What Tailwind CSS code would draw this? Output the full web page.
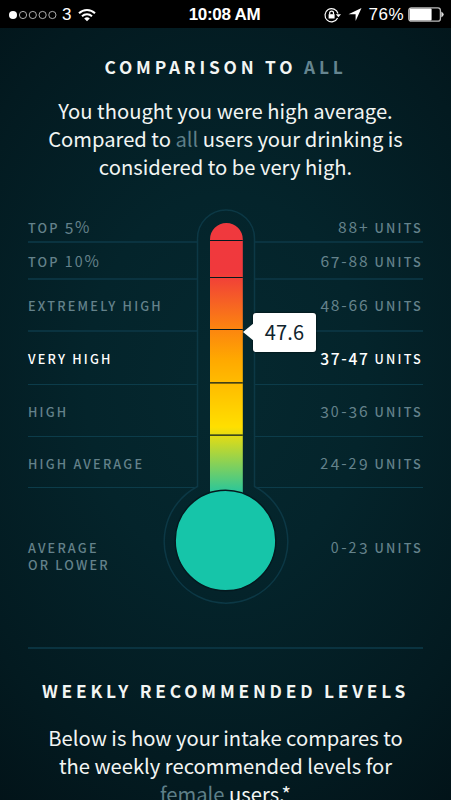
<!DOCTYPE html>
<html lang="en">
<head>
    <meta charset="UTF-8">
    <meta name="viewport" content="width=device-width, initial-scale=1.0">
    <title>Drink Comparison</title>
    <script src="https://cdn.jsdelivr.net/npm/@tailwindcss/browser@4"></script>
</head>
<body class="h-[800px] w-[451px] overflow-hidden bg-black font-['Noto_Sans_CJK_JP','Open_Sans',sans-serif] text-[#f2f5f3]">
    <!-- Status bar -->
    <header class="grid h-7 grid-cols-3 items-center bg-black pl-[9px] pr-[7px] font-['Liberation_Sans',sans-serif] text-white">
        <div class="flex items-center pt-px">
            <svg class="h-[10px] w-[49px]" viewBox="0 0 49 10" fill="none" stroke="#d5d5d5" stroke-width="0.8">
                <circle cx="4" cy="5" r="4" fill="#fff" stroke="none"/>
                <circle cx="14" cy="5" r="3.6"/>
                <circle cx="23.8" cy="5" r="3.6"/>
                <circle cx="33.6" cy="5" r="3.6"/>
                <circle cx="43.4" cy="5" r="3.6"/>
            </svg>
            <span class="ml-[4px] text-[17px] leading-[27px]">3</span>
            <svg class="ml-[7px] h-[14px] w-[18px]" viewBox="0 0 18 14" fill="none" stroke="#fff" stroke-width="2">
                <path d="M1 5.2A11.5 11.5 0 0 1 17 5.2"/>
                <path d="M4 8.3A7.2 7.2 0 0 1 14 8.3"/>
                <path d="M9 13.3L6.2 10.5A4 4 0 0 1 11.8 10.5Z" fill="#fff" stroke="none"/>
            </svg>
        </div>
        <div class="-ml-1 whitespace-nowrap pt-px text-center text-[17px] font-bold leading-[27px] tracking-[-0.3px]">10:08 AM</div>
        <div class="flex items-center justify-end pt-px">
            <svg class="h-4 w-[18px]" viewBox="0 0 18 16" fill="none" stroke="#fff" stroke-width="1.2">
                <path d="M13.6 11A6.6 6.6 0 1 1 14 6.5"/>
                <path d="M11.8 7.2H17L14.4 10.2Z" fill="#fff" stroke="none"/>
                <rect x="4.6" y="7.2" width="6" height="4.3" fill="#fff" stroke="none"/>
                <path d="M5.7 7.4V6A1.9 1.9 0 0 1 9.5 6V7.4"/>
            </svg>
            <svg class="ml-[6px] h-[13px] w-[14px]" viewBox="0 0 14 13" fill="#fff">
                <path d="M13.5 0L7.6 13V6.3H0.5Z"/>
            </svg>
            <span class="ml-[6px] text-[17px] leading-[27px] tracking-[0.5px]">76%</span>
            <svg class="ml-[4px] h-[15px] w-9" viewBox="0 0 36 15">
                <rect x="0.8" y="0.8" width="31.6" height="13.4" rx="2.5" fill="none" stroke="#bbb" stroke-width="1.3"/>
                <rect x="1.6" y="1.6" width="22" height="11.8" rx="1" fill="#fff"/>
                <path d="M33.3 4.4Q35.7 5.8 35.7 7.4T33.3 10.4Z" fill="#ddd"/>
            </svg>
        </div>
    </header>

    <main class="h-[772px] overflow-hidden bg-[radial-gradient(ellipse_400px_540px_at_50%_46%,#05282f_0%,#04242b_35%,#031a20_75%,#021217_100%)] px-7">
        <h1 class="pt-[25px] text-center text-[17.3px] font-bold leading-7 tracking-[3.8px]">COMPARISON TO <span class="text-[#658590]">ALL</span></h1>
        <p class="mt-4 whitespace-nowrap text-center text-[20.2px] leading-[28px]">
            You thought you were high average.<br>
            Compared to <span class="text-[#5e7f88]">all</span> users your drinking is<br>
            considered to be very high.
        </p>

        <!-- Thermometer chart, figures are set old-style: 0 1 2 small, 3 4 5 7 9 lowered -->
        <section class="relative mt-[27px] h-[439px] text-[12.7px] font-medium leading-[17px] tracking-[2.2px] text-[#64828b]">
            <div class="flex h-[35px] justify-between">
                <div class="flex w-[169px] items-end border-b-2 border-[#0a3340] pb-[5px]"><span>TOP <span class="text-[15.6px] font-normal tracking-[1.4px]"><span class="relative top-px">5</span>%</span></span></div>
                <div class="flex w-[168px] items-end justify-end border-b-2 border-[#0a3340] pb-[5px]"><span><span class="text-[15.6px] font-normal tracking-[1.8px]">88+</span> UNITS</span></div>
            </div>
            <div class="flex h-[37px] justify-between">
                <div class="flex w-[169px] items-center border-b-2 border-[#0a3340]"><span>TOP <span class="text-[15.6px] font-normal tracking-[1.4px]"><span class="text-[14.2px] tracking-[2px]">10</span>%</span></span></div>
                <div class="flex w-[168px] items-center justify-end border-b-2 border-[#0a3340]"><span><span class="text-[15.6px] font-normal tracking-[1.8px]">6<span class="relative top-px">7</span>-88</span> UNITS</span></div>
            </div>
            <div class="flex h-[52px] justify-between">
                <div class="flex w-[169px] items-center border-b-2 border-[#0a3340]">EXTREMELY HIGH</div>
                <div class="flex w-[168px] items-center justify-end border-b-2 border-[#0a3340]"><span><span class="text-[15.6px] font-normal tracking-[1.8px]"><span class="relative top-px">4</span>8-66</span> UNITS</span></div>
            </div>
            <div class="flex h-[53px] justify-between text-white">
                <div class="flex w-[169px] items-center border-b border-[#0c3c4a]">VERY HIGH</div>
                <div class="flex w-[168px] items-center justify-end border-b border-[#0c3c4a]"><span><span class="text-[15.6px] tracking-[1.6px]"><span class="relative top-px">37</span>-<span class="relative top-px">47</span></span> UNITS</span></div>
            </div>
            <div class="flex h-[52px] justify-between">
                <div class="flex w-[169px] items-center border-b border-[#0c3c4a] pt-px">HIGH</div>
                <div class="flex w-[168px] items-center justify-end border-b border-[#0c3c4a]"><span><span class="text-[15.6px] font-normal tracking-[1.8px]"><span class="relative top-px">3</span><span class="text-[14.2px] tracking-[2.6px]">0</span>-<span class="relative top-px">3</span>6</span> UNITS</span></div>
            </div>
            <div class="flex h-[51px] justify-between">
                <div class="flex w-[169px] items-center border-b border-[#0c3c4a] pt-[2px]">HIGH AVERAGE</div>
                <div class="flex w-[168px] items-center justify-end border-b border-[#0c3c4a] pt-px"><span><span class="text-[15.6px] font-normal tracking-[1.8px]"><span class="text-[14.2px] tracking-[2.6px]">2</span><span class="relative top-px">4</span>-<span class="text-[14.2px] tracking-[2.6px]">2</span><span class="relative top-px">9</span></span> UNITS</span></div>
            </div>
            <div class="flex justify-between pt-[51px]">
                <div>AVERAGE<br>OR LOWER</div>
                <div class="-mt-px"><span class="text-[15.6px] font-normal tracking-[1.8px]"><span class="text-[14.2px] tracking-[2.6px]">0</span>-<span class="text-[14.2px] tracking-[2.6px]">2</span><span class="relative top-px">3</span></span> UNITS</div>
            </div>

            <svg class="absolute left-[135px] top-0 h-[400px] w-[126px]" viewBox="163 208 126 400">
                <defs>
                    <linearGradient id="heat" gradientUnits="userSpaceOnUse" x1="0" y1="223" x2="0" y2="495">
                        <stop offset="0" stop-color="#f0393e"/>
                        <stop offset="0.18" stop-color="#f0393c"/>
                        <stop offset="0.39" stop-color="#fc850f"/>
                        <stop offset="0.5" stop-color="#ffa800"/>
                        <stop offset="0.75" stop-color="#ffdf00"/>
                        <stop offset="1" stop-color="#20c5a2"/>
                    </linearGradient>
                </defs>
                <path d="M197.5 486.5V238.4A28.5 28.5 0 0 1 254.5 238.4V486.5A61.8 61.8 0 1 1 197.5 486.5Z" fill="none" stroke="#0c3845" stroke-width="1.5"/>
                <path d="M210 495V239.4A16.4 16.4 0 0 1 242.8 239.4V495Z" fill="url(#heat)"/>
                <path d="M210 240.5H242.8M210 277.5H242.8M210 329.5H242.8M210 382.9H242.8M210 435.2H242.8" stroke="#04191f" stroke-width="1.2"/>
                <circle cx="225.5" cy="540.5" r="50.3" fill="#16c5a9" stroke="#04191f" stroke-width="1.4"/>
            </svg>

            <!-- Current value -->
            <div class="absolute left-[225px] top-[105px] flex h-[39px] w-[63px] items-center justify-center rounded-[3px] bg-white pb-[2px] text-[20px] font-normal tracking-[0.2px] text-[#10242d] shadow-[0_0_2px_#000]">
                <svg class="absolute -left-[10px] top-[10px] h-[18px] w-[11px]" viewBox="0 0 11 18" fill="#fff"><path d="M11 0L0 9L11 18Z"/></svg>
                47.6
            </div>
        </section>

        <section class="border-t-2 border-[#0a3340] text-center">
            <h2 class="whitespace-nowrap pt-[28px] text-[17.3px] font-bold leading-7 tracking-[3.8px]">WEEKLY RECOMMENDED LEVELS</h2>
            <p class="mt-[19px] whitespace-nowrap text-[20.2px] leading-[28px]">
                Below is how your intake compares to<br>
                the weekly recommended levels for<br>
                <span class="text-[#5e7f88]">female</span> users.*
            </p>
        </section>
    </main>
</body>
</html>
